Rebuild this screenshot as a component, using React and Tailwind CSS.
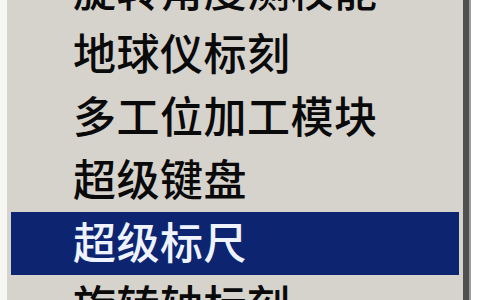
const items = [
    { label: '旋转角度测校能' },
    { label: '地球仪标刻' },
    { label: '多工位加工模块' },
    { label: '超级键盘' },
    { label: '超级标尺', active: true },
    { label: '旋转轴标刻' },
];

const App = () => {
    return (
        <div className="w-[484px] h-[300px] overflow-hidden bg-white">
            <div className="w-[471px] h-full border-r-2 border-r-[#9c9c9a]">
                <div className="h-full flex border-l-[7px] border-l-[#f6f6f3] border-r-[6px] border-r-[#4f4f4d] bg-[#d6d3cd]">
                    <div className="flex-1 pl-[4px] pr-[4px] -mt-[40px]">
                        {items.map((item) => (
                            <div
                                key={item.label}
                                className={`h-[63px] flex items-center pl-[62px] pb-[7px] whitespace-nowrap text-[43px] font-medium leading-none tracking-[0.5px] font-['Noto_Sans_CJK_SC',sans-serif] ${
                                    item.active ? 'bg-[#0d2570] text-[#eef3ff]' : 'text-[#0a0a0a]'
                                }`}
                            >
                                {item.label}
                            </div>
                        ))}
                    </div>
                </div>
            </div>
        </div>
    );
};

export default App;
